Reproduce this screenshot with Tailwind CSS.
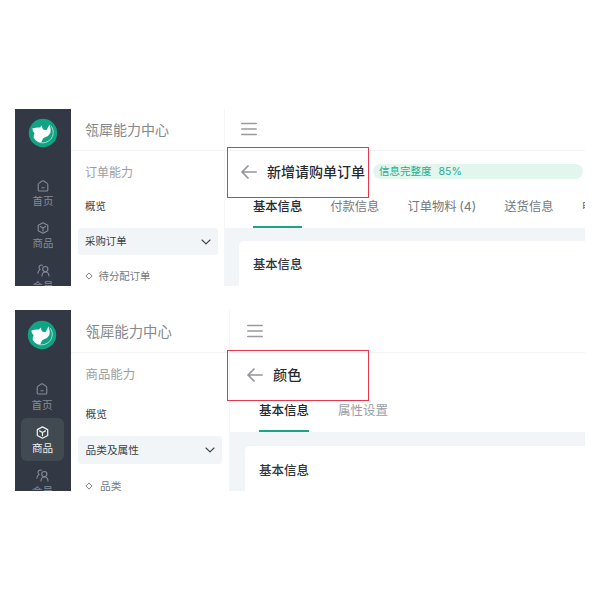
<!DOCTYPE html>
<html lang="zh-CN">
<head>
<meta charset="utf-8">
<title>瓴犀能力中心</title>
<script src="https://cdn.jsdelivr.net/npm/@tailwindcss/browser@4"></script>
</head>
<body class="bg-white">
<svg class="hidden">
  <defs>
    <symbol id="logo" viewBox="0 0 30 30">
      <circle cx="15" cy="15" r="14.2" fill="#10a384"/>
      <path d="M4.4 10.4Q9 9 12 9.6L13.6 7.6L14.8 11Q16.8 12.6 19 11.4L21.4 6.4Q23.6 12 22 15.6Q20.6 18.4 17.8 19Q15 19.6 14.4 21.7Q14 23.6 12.6 24.8Q8 24 5.6 19.5Q5.4 17.4 6.6 15.2Q4.4 13.5 4.4 10.4Z" fill="#fff"/>
      <path d="M22.8 7.8C26.2 11.6 26 17.8 22.3 21.6C19.6 24.3 16 25.4 12.4 24.6" fill="none" stroke="#a5dfd2" stroke-width="1"/>
    </symbol>
    <symbol id="home" viewBox="0 0 12 12">
      <path d="M1.2 4.5Q1.2 3.8 1.8 3.4L5.2 1Q6 .5 6.8 1L10.2 3.4Q10.8 3.8 10.8 4.5V10Q10.8 11 9.8 11H2.2Q1.2 11 1.2 10ZM4.9 7.7H7.1" fill="none" stroke="currentColor" stroke-width="1.1" stroke-linecap="round"/>
    </symbol>
    <symbol id="cube" viewBox="0 0 12 12">
      <path d="M6 .8L10.8 3.3V8.7L6 11.3L1.2 8.7V3.3ZM3.3 4.5L6 6L8.7 4.5M6 6V8.9" fill="none" stroke="currentColor" stroke-width="1.15" stroke-linecap="round" stroke-linejoin="round"/>
    </symbol>
    <symbol id="users" viewBox="0 0 13 13">
      <path d="M5.4 1.2A2.4 2.4 0 0 0 2.5 4.8L3 5.4Q1 6.5 .9 9.3M5 12Q5.1 8 8.4 8Q11.8 8 12 12" fill="none" stroke="currentColor" stroke-width="1.1" stroke-linecap="round"/>
      <circle cx="8.3" cy="5.1" r="2.6" fill="none" stroke="currentColor" stroke-width="1.1"/>
    </symbol>
    <symbol id="chevron" viewBox="0 0 10 6"><path d="M1 1L5 4.8L9 1" fill="none" stroke="currentColor" stroke-width="1.1" stroke-linecap="round" stroke-linejoin="round"/></symbol>
    <symbol id="diamond" viewBox="0 0 8 8"><path d="M4 .9L7.1 4L4 7.1L.9 4Z" fill="none" stroke="currentColor" stroke-width=".9"/></symbol>
    <symbol id="menu" viewBox="0 0 16 14"><path d="M.8 1.5H15.2M.8 7H15.2M.8 12.5H15.2" fill="none" stroke="currentColor" stroke-width="1.7" stroke-linecap="round"/></symbol>
    <symbol id="back" viewBox="0 0 16 14"><path d="M7 1L1 7L7 13M1 7H15.2" fill="none" stroke="currentColor" stroke-width="1.7" stroke-linecap="round" stroke-linejoin="round"/></symbol>
  </defs>
</svg>

<main class="relative flex h-[600px] w-[600px] flex-col gap-6 overflow-hidden bg-white px-[15px] pt-[109px] font-['Noto_Sans_CJK_SC','Noto_Sans',sans-serif] whitespace-nowrap">

  <section class="flex h-[177px] w-[570px] shrink-0 overflow-hidden">
    <nav class="flex w-14 shrink-0 flex-col items-center bg-[#323945] text-[10.4px] text-[#878c94]">
      <svg class="mt-[9px] size-[30px] shrink-0"><use href="#logo"/></svg>
      <div class="mt-8 flex h-[42px] shrink-0 flex-col items-center"><svg class="size-3"><use href="#home"/></svg><span class="mt-px leading-4">首页</span></div>
      <div class="flex h-[42px] shrink-0 flex-col items-center"><svg class="size-3"><use href="#cube"/></svg><span class="mt-px leading-4">商品</span></div>
      <div class="flex shrink-0 flex-col items-center"><svg class="size-[13px]"><use href="#users"/></svg><span class="mt-px leading-4">会员</span></div>
    </nav>
    <aside class="w-[154px] shrink-0 border-r border-[#f4f5f6] text-[10.4px]">
      <div class="h-[42px] border-b border-[#f2f3f4] pl-[14px] text-[14px] leading-[40px] text-[#85888c]">瓴犀能力中心</div>
      <div class="h-[42px] pl-[14px] text-[12px] leading-[41px] text-[#9b9da1]">订单能力</div>
      <div class="h-[27px] pl-[14px] leading-[25px] text-[#3c4046]">概览</div>
      <div class="mt-2 ml-[7px] flex h-[27px] w-[140px] items-center justify-between rounded-[3px] bg-[#f1f5f8] px-[7px] leading-[27px] text-[#3c4046]"><span class="pb-px leading-[26px]">采购订单</span><svg class="h-[6px] w-[10px]"><use href="#chevron"/></svg></div>
      <div class="flex items-center gap-[6px] pl-[13.5px] leading-[42px] text-[#73777c]"><svg class="size-2"><use href="#diamond"/></svg><span>待分配订单</span></div>
    </aside>
    <div class="flex min-w-0 flex-1 flex-col bg-[#f1f5f8]">
      <header class="h-[42px] shrink-0 border-b border-[#f2f3f4] bg-white pt-[13px] pl-[16px] text-[#989a9d]"><svg class="h-[14px] w-4"><use href="#menu"/></svg></header>
      <div class="flex h-[42px] shrink-0 items-center bg-white pl-[16px]">
        <svg class="mb-px h-[14px] w-4 text-[#929599]"><use href="#back"/></svg>
        <h1 class="ml-[10px] h-[42px] text-[14px] leading-[40px] font-medium text-[#252a32]">新增请购单订单</h1>
        <div class="mb-px ml-2 h-[15px] w-[210px] rounded-full bg-[#e2f6ee] pl-[6px] text-[10.5px] leading-[14px] text-[#20af93]"><span>信息完整度</span><span class="ml-[7px] font-['Inter']">85%</span></div>
      </div>
      <div class="flex h-[35px] shrink-0 gap-[28px] bg-white pl-7 text-[12.3px] leading-[27px] text-[#73777c]">
        <span class="border-b-2 border-[#1ea38a] font-medium text-[#252a32]">基本信息</span><span>付款信息</span><span>订单物料 <span class="font-['Inter']">(4)</span></span><span>送货信息</span><span>电</span>
      </div>
      <div class="mt-[13px] ml-[14px] flex-1 rounded-tl-[5px] bg-white pl-[14px] text-[12.3px] leading-[47px] font-medium text-[#30353c]">基本信息</div>
    </div>
  </section>

  <section class="flex h-[181px] w-[570px] shrink-0 overflow-hidden">
    <nav class="flex w-14 shrink-0 flex-col items-center bg-[#323945] text-[10.6px] text-[#878c94]">
      <svg class="mt-[10px] mr-[2px] size-[30px] shrink-0"><use href="#logo"/></svg>
      <div class="mt-[33px] mr-[2px] flex h-[35px] shrink-0 flex-col items-center"><svg class="size-3"><use href="#home"/></svg><span class="mt-[2px] leading-4">首页</span></div>
      <div class="mr-px flex h-[43px] w-[43px] shrink-0 flex-col items-center rounded-[6px] bg-[#414951] pt-2 text-[#eff0f1]"><svg class="size-[13px]"><use href="#cube"/></svg><span class="mt-px leading-4">商品</span></div>
      <div class="mt-2 mr-px flex shrink-0 flex-col items-center"><svg class="size-[13px]"><use href="#users"/></svg><span class="mt-px leading-4">会员</span></div>
    </nav>
    <aside class="w-[159px] shrink-0 border-r border-[#f4f5f6] text-[10.7px]">
      <div class="h-[43px] border-b border-[#f2f3f4] pl-[14.5px] text-[14.4px] leading-[42px] text-[#85888c]">瓴犀能力中心</div>
      <div class="pl-[14.5px] text-[12.4px] leading-[43px] text-[#9b9da1]">商品能力</div>
      <div class="pl-[14.5px] leading-[35px] text-[#3c4046]">概览</div>
      <div class="mt-[5px] ml-[7px] flex h-[28px] w-[144px] items-center justify-between rounded-[3px] bg-[#f1f5f8] pr-[7px] pl-[7.5px] leading-[28px] text-[#3c4046]"><span>品类及属性</span><svg class="h-[6px] w-[10px]"><use href="#chevron"/></svg></div>
      <div class="flex items-center gap-[7px] pl-[14px] leading-[43px] text-[#73777c]"><svg class="size-2"><use href="#diamond"/></svg><span>品类</span></div>
    </aside>
    <div class="flex min-w-0 flex-1 flex-col bg-[#f1f5f8]">
      <header class="h-[43px] shrink-0 border-b border-[#f2f3f4] bg-white pt-[14px] pl-[17px] text-[#989a9d]"><svg class="h-[14px] w-4"><use href="#menu"/></svg></header>
      <div class="flex h-[43px] shrink-0 items-center bg-white pl-[17px]">
        <svg class="h-[14px] w-4 text-[#929599]"><use href="#back"/></svg>
        <h1 class="ml-[10px] text-[14.2px] leading-[43px] font-medium text-[#252a32]">颜色</h1>
      </div>
      <div class="flex h-[36px] shrink-0 gap-[29px] bg-white pl-[29px] text-[12.5px] leading-[28px] text-[#9b9da1]">
        <span class="border-b-2 border-[#1ea38a] font-medium text-[#252a32]">基本信息</span><span>属性设置</span>
      </div>
      <div class="mt-[14px] ml-[15px] flex-1 rounded-tl-[5px] bg-white pl-[14px] text-[12.5px] leading-[47px] font-medium text-[#30353c]">基本信息</div>
    </div>
  </section>

  <div class="absolute top-[147px] left-[227px] h-[51px] w-[142px] border border-[#e8364c]"></div>
  <div class="absolute top-[350px] left-[227px] h-[51px] w-[142px] border border-[#e8364c]"></div>
</main>
</body>
</html>
